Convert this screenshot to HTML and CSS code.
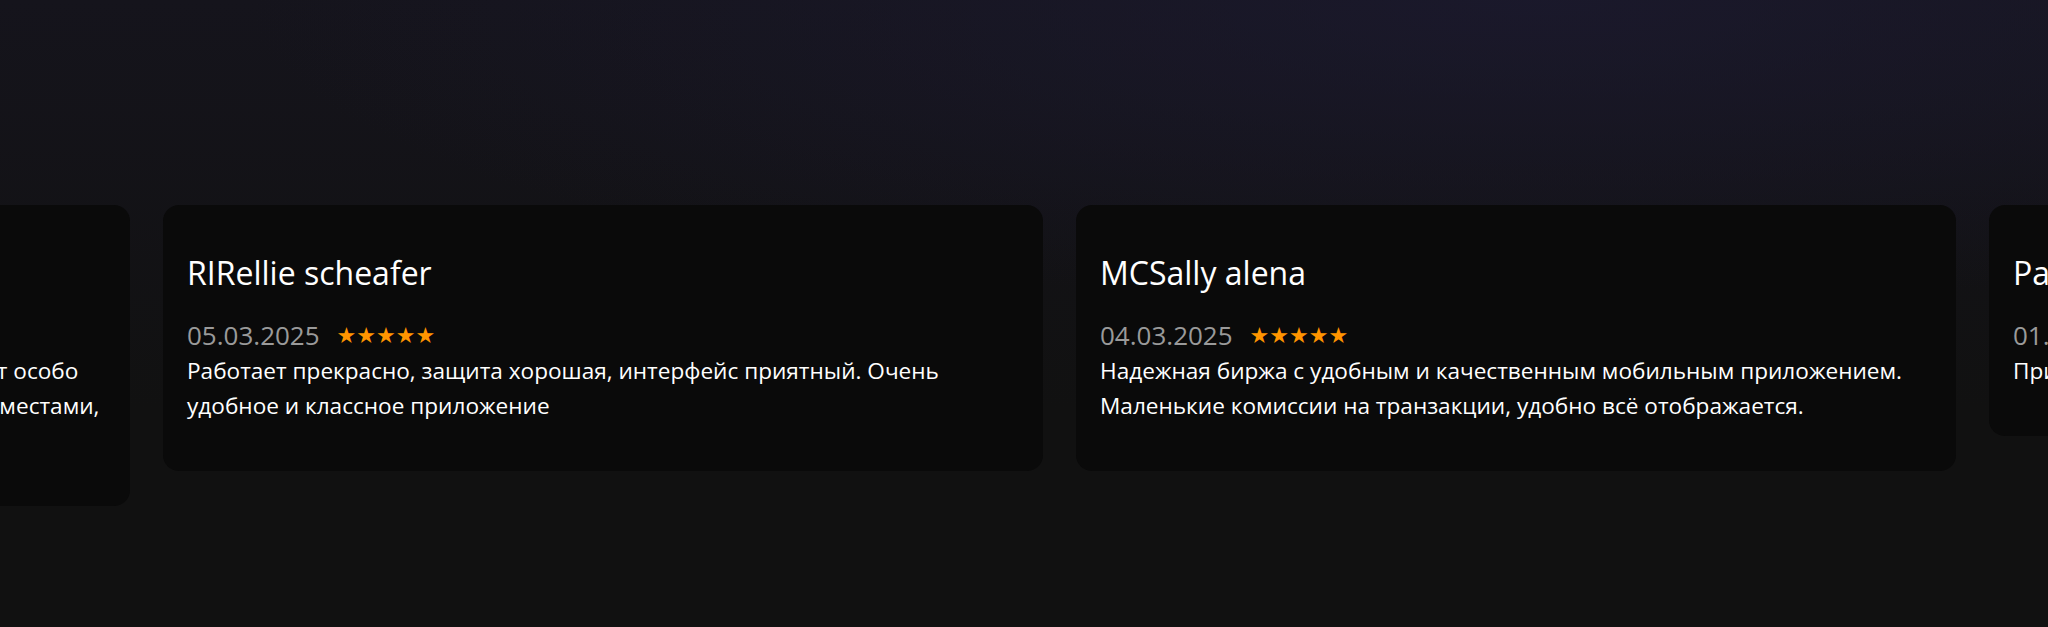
FILE: index.html
```html
<!DOCTYPE html>
<html lang="ru">
<head>
    <meta charset="UTF-8">
    <meta name="viewport" content="width=device-width, initial-scale=1.0">
    <title>Отзывы</title>
    <link rel="stylesheet" href="styles.css">
</head>
<body>
    <section class="reviews">
        <div class="reviews-track">
            <div class="review-card">
                <div class="review-name">DKDaniel kors</div>
                <div class="review-meta">
                    <span class="review-date">06.03.2025</span>
                    <span class="review-stars">★★★★★</span>
                </div>
                <p class="review-text">Пользуюсь приложением почти полгода, работает стабильно, нет особо выдающихся функций. Интерфейс хороший, графики подвисают местами, в целом доволен.</p>
            </div>
            <div class="review-card">
                <div class="review-name">RIRellie scheafer</div>
                <div class="review-meta">
                    <span class="review-date">05.03.2025</span>
                    <span class="review-stars">★★★★★</span>
                </div>
                <p class="review-text">Работает прекрасно, защита хорошая, интерфейс приятный. Очень удобное и классное приложение</p>
            </div>
            <div class="review-card">
                <div class="review-name">MCSally alena</div>
                <div class="review-meta">
                    <span class="review-date">04.03.2025</span>
                    <span class="review-stars">★★★★★</span>
                </div>
                <p class="review-text">Надежная биржа с удобным и качественным мобильным приложением. Маленькие комиссии на транзакции, удобно всё отображается.</p>
            </div>
            <div class="review-card">
                <div class="review-name">Pavel smirnov</div>
                <div class="review-meta">
                    <span class="review-date">01.03.2025</span>
                    <span class="review-stars">★★★★★</span>
                </div>
                <p class="review-text">Приложение удобное, всё работает быстро.</p>
            </div>
        </div>
    </section>
</body>
</html>
```

FILE: styles.css
```css
body {
    margin: 0;
    font-family: 'Open Sans', 'Noto Sans', sans-serif;
    background:
        radial-gradient(ellipse 90% 70% at 75% 0%, rgba(28, 26, 48, 0.75), transparent 70%),
        linear-gradient(180deg, #15141c 0%, #111111 65%);
    background-color: #111111;
    color: #fff;
    height: 100vh;
    overflow: hidden;
}
.reviews {
    padding-top: 205px;
    overflow: hidden;
}
.reviews-track {
    display: flex;
    align-items: flex-start;
    gap: 33px;
    transform: translateX(-750px);
}
.review-card {
    flex: 0 0 880px;
    box-sizing: border-box;
    padding: 48px 24px;
    background: #0a0a0a;
    border-radius: 16px;
}
.review-name {
    font-size: 32px;
    line-height: 40px;
    margin-bottom: 25px;
}
.review-meta {
    display: flex;
    align-items: center;
    gap: 17px;
    line-height: 35px;
}
.review-date {
    font-size: 26px;
    color: #9a9a9a;
}
.review-stars {
    font-family: 'DejaVu Sans', sans-serif;
    font-size: 22px;
    color: #ff9500;
    line-height: 1;
}
.review-text {
    margin: 0;
    font-size: 22.6px;
    line-height: 35px;
}
```
